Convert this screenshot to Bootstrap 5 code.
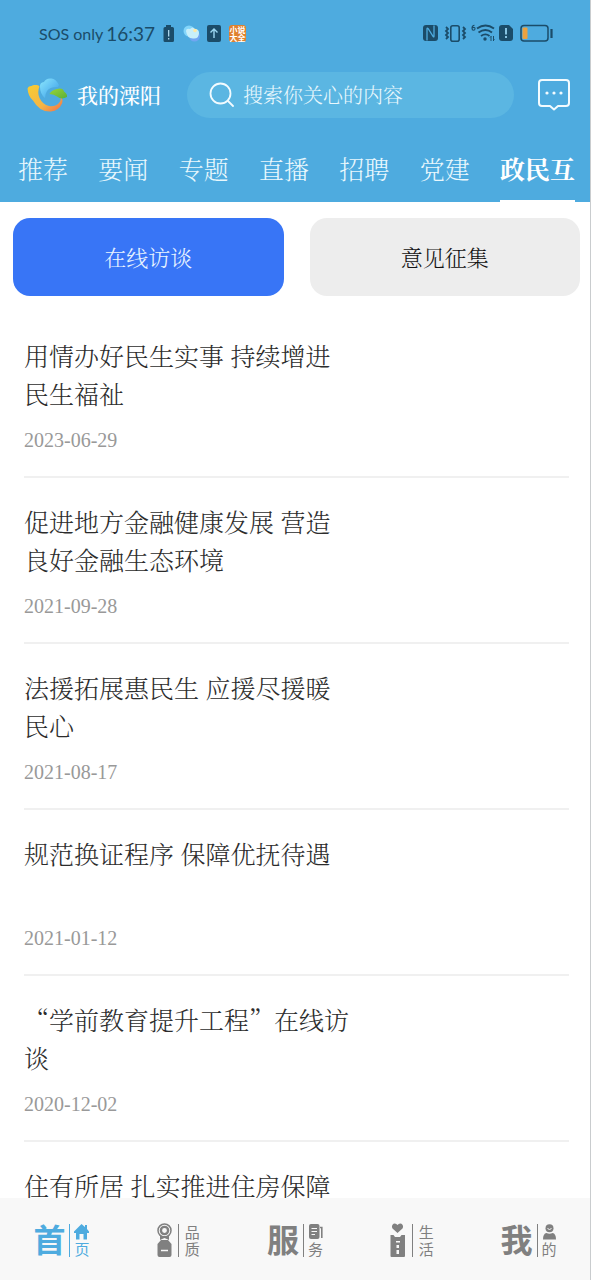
<!DOCTYPE html>
<html lang="zh-CN">
<head>
<meta charset="utf-8">
<meta name="viewport" content="width=device-width, initial-scale=1">
<title>我的溧阳</title>
<link href="https://cdn.jsdelivr.net/npm/bootstrap@5.3.0/dist/css/bootstrap.min.css" rel="stylesheet">
<style>
  :root { --sky: #4eabdf; --ink: #1b4c69; --cjk: "Noto Serif CJK SC", "Noto Serif SC", "Noto Sans CJK SC", serif; }
  body { font-family: var(--cjk); font-weight: 300; color: #2c2c2c; border-right: 1px solid #c9ccce; }
  svg { display: block; flex: none; }
  .app-head { background: var(--sky); margin-right: -1px; }
  .status-bar { height: 68px; padding: 0 38px 0 39px; color: var(--ink); font-family: Lato, "Noto Sans CJK SC", sans-serif; font-weight: 400; }
  .status-net { font-size: 16px; }
  .status-time { font-size: 19px; margin: 0 7px 0 3px; }
  .tiny-app { font: 700 8px "Noto Sans CJK SC", sans-serif; }
  .brand-bar { padding: 4px 21px 0 27px; }
  .brand-name { font-size: 21px; font-weight: 500; color: #fff; margin: 0 26px 0 10px; }
  .search-pill { background: #5bb6e2; height: 46px; border-radius: 23px; padding: 0 22px; margin-right: 24px; gap: 9px; }
  .search-pill input { border: 0; background: none; outline: 0; padding: 0; min-width: 0; font-size: 20px; font-weight: 300; color: #fff; }
  .search-pill input::placeholder { color: #e9f8fd; opacity: 1; }
  .tab-strip { padding: 20px 16px 0 18px; }
  .tab-strip a { display: block; font-size: 25px; line-height: 36px; padding: 12px 0 14px; color: #e9f8fd; text-decoration: none; border-bottom: 2px solid transparent; white-space: nowrap; }
  .tab-strip a.active { color: #fff; font-weight: 700; border-color: #fff; }
  .feed { scrollbar-width: none; }
  .feed::-webkit-scrollbar { display: none; }
  .switcher { padding: 16px 10px 16px 13px; gap: 26px; }
  .switcher button { flex: 1; height: 78px; border: 0; border-radius: 17px; font-size: 22px; font-weight: 300; background: #ededed; color: #111; padding: 0 0 2px; }
  .switcher button.on { background: #3875f6; color: #e9f4ff; }
  .stories { padding: 0 21px 0 24px; }
  .stories li { padding: 24px 0; border-bottom: 2px solid #f0f0f0; }
  .stories a { display: block; width: 60%; min-height: 76px; font-size: 25px; line-height: 38px; color: #2c2c2c; text-decoration: none; }
  .stories time { display: block; margin-top: 16px; font: 20px/24px "Liberation Serif", serif; color: #999; }
  .dock { background: #f8f8f8; height: 82px; padding: 0 3px; font-family: "Noto Sans CJK SC", sans-serif; }
  .dock a { flex: 1; gap: 4px; color: #808080; text-decoration: none; padding-top: 2px; }
  .dock a.active { color: var(--sky); }
  .dock .glyph { font-size: 32px; line-height: 34px; font-weight: 700; padding-bottom: 5px; }
  .dock .rule { width: 1px; height: 33px; background: currentColor; }
  .dock .pair { font-size: 15px; line-height: 17px; font-weight: 400; }
  .dock .spread { gap: 6px; }
</style>
</head>
<body class="vh-100 d-flex flex-column overflow-hidden bg-white">
<header class="app-head">
  <div class="status-bar d-flex align-items-center">
    <span class="status-net">SOS only</span>
    <span class="status-time">16:37</span>
    <svg width="86" height="20" viewBox="0 0 86 20" aria-hidden="true">
      <path fill="#1b4c69" d="M4 1h5v2h1.500q1.500 0 1.500 1.500v12q0 1.500-1.500 1.500h-7.500q-1.500 0-1.500-1.500v-12q0-1.500 1.500-1.500H4z"/>
      <path stroke="#b9e2f5" stroke-width="1.200" d="M6.700 6v6.500M6.700 14v1.500"/>
      <circle cx="27" cy="7" r="5.500" fill="#83d5fa"/><circle cx="32.500" cy="12" r="5.500" fill="#71a6f2"/>
      <path fill="#c8effa" d="M24 7q0-3 4-2 3-3 5 0 4 0 4 4 0 6-6 5.500-6 0-7-7.500z"/><circle cx="33" cy="6.500" r="1.800" fill="#ffe9a6"/>
      <rect x="45" y="1" width="14" height="17" rx="2" fill="#1b4c69"/>
      <path fill="none" stroke="#9cd7f2" stroke-width="1.400" d="M52 14V5M48.500 8.500 52 5l3.500 3.500"/>
      <rect x="67" y="1" width="17" height="17" rx="3" fill="#df812e"/>
      <g fill="#fff" class="tiny-app"><text x="67.500" y="9">小说</text><text x="67.500" y="16.500">大全</text></g>
    </svg>
    <svg class="ms-auto" width="130" height="20" viewBox="0 0 130 20" fill="none" stroke="#1b4c69" aria-hidden="true">
      <rect x="0" y="1" width="15" height="16" rx="3" fill="#1b4c69" stroke="none"/>
      <path stroke="#4eabdf" stroke-width="1.300" d="M4 16.500V5q0-1.500 1.200-.3l5 7.800q.8 1 .8-.5V1.500"/>
      <rect x="27.800" y="1.800" width="8.400" height="15.400" rx="2" stroke-width="1.600"/>
      <path stroke-width="1.800" d="m23 3 2 2-2 2 2 2-2 2 2 2-2 2M40 3l2 2-2 2 2 2-2 2 2 2-2 2"/>
      <path stroke-width="1.100" d="M51.500 1.200q-2.500 0-2.500 3 0 2 1.500 2t1.500-1.500-1.500-1.300-1.500 1"/>
      <path stroke-width="1.900" d="M54 4.500q8.500-6 17 0M55.500 8.500q7-5 13.500 0M58 12q4.500-3.200 8.500 0"/>
      <circle cx="62" cy="15" r="1.700" fill="#1b4c69" stroke="none"/><path d="M68 12v5M70.500 12v5M67 13.500l1-1M71.500 15.500l-1 1"/>
      <path fill="#1b4c69" stroke="none" d="M76 4q0-3 3-3h7l4 4v9q0 3-3 3h-8q-3 0-3-3z"/><path stroke="#93d0ee" stroke-width="1.800" d="M83 4v6.500M83 12v2"/>
      <rect x="98" y="1.500" width="27" height="15.500" rx="3" stroke-width="1.500"/><rect x="99.500" y="3.500" width="5" height="11.500" rx="1" fill="#eba23f" stroke="none"/><path stroke-width="2.200" d="M128.500 5v9"/>
    </svg>
  </div>
  <div class="brand-bar d-flex align-items-center">
    <svg width="40" height="34" viewBox="0 0 40 34" aria-hidden="true">
      <defs>
        <linearGradient id="sun" x2="1" y2="1"><stop stop-color="#f6cd33"/><stop offset=".6" stop-color="#f4b546"/><stop offset="1" stop-color="#ee6e4b"/></linearGradient>
        <linearGradient id="water" y2="1"><stop stop-color="#8be6fd"/><stop offset="1" stop-color="#389ce8"/></linearGradient>
        <linearGradient id="leaf" y2="1"><stop stop-color="#9bd634"/><stop offset="1" stop-color="#58af3b"/></linearGradient>
      </defs>
      <path fill="url(#sun)" d="M.500 11q.500-3 4-3Q6 6.500 9 7q2.500-.5 3.500 1.500Q10 14 12.500 20q3 6.500 9.500 8 6 1 10-3 2.500-2.500 1.500-6 3 2 1.500 6.500-3 7-11 8-11 1-18-11-5-4-5.500-12.500z"/>
      <path fill="url(#water)" d="M13 9q-.500-4.500 4-5 2-4 7-3.500 4.500-.5 8 6.500l-1 2q-8-.500-11 4-2 3-2 7-5-4-5-11z"/>
      <path fill="url(#leaf)" d="M22.500 16q2-4 7.500-5 6-1.500 7 2.500 4 3 3 5.500-5.500 3-10-.500-3-2.500-7.500-2.500z"/>
    </svg>
    <span class="brand-name text-nowrap">我的溧阳</span>
    <label class="search-pill d-flex align-items-center flex-fill">
      <svg width="25" height="26" viewBox="0 0 25 26" fill="none" stroke="#f2fbff" stroke-width="1.800" stroke-linecap="round" aria-hidden="true"><circle cx="11.500" cy="11.500" r="10"/><path d="m19 19 5 5"/></svg>
      <input class="flex-fill" type="search" placeholder="搜索你关心的内容" aria-label="搜索">
    </label>
    <button class="btn p-0 border-0" type="button" aria-label="消息">
      <svg width="32" height="32" viewBox="0 0 32 32" aria-hidden="true"><path fill="none" stroke="#f2fbff" stroke-width="2" stroke-linejoin="round" d="M4 1h24q3 0 3 3v20q0 3-3 3h-8l-4 3.500-4-3.500H4q-3 0-3-3V4q0-3 3-3z"/><g fill="#f2fbff"><circle cx="9" cy="14" r="1.600"/><circle cx="16" cy="14" r="1.600"/><circle cx="23" cy="14" r="1.600"/></g></svg>
    </button>
  </div>
  <nav class="tab-strip d-flex justify-content-between" aria-label="频道">
    <a href="#">推荐</a><a href="#">要闻</a><a href="#">专题</a><a href="#">直播</a><a href="#">招聘</a><a href="#">党建</a><a href="#" class="active" aria-current="page">政民互</a>
  </nav>
</header>

<main class="feed flex-fill overflow-auto">
  <div class="switcher d-flex">
    <button type="button" class="on">在线访谈</button>
    <button type="button">意见征集</button>
  </div>
  <ul class="stories list-unstyled mb-0">
    <li><a href="#">用情办好民生实事 持续增进民生福祉</a><time>2023-06-29</time></li>
    <li><a href="#">促进地方金融健康发展 营造良好金融生态环境</a><time>2021-09-28</time></li>
    <li><a href="#">法援拓展惠民生 应援尽援暖民心</a><time>2021-08-17</time></li>
    <li><a href="#">规范换证程序 保障优抚待遇</a><time>2021-01-12</time></li>
    <li><a href="#">“学前教育提升工程”在线访谈</a><time>2020-12-02</time></li>
    <li><a href="#">住有所居 扎实推进住房保障</a></li>
  </ul>
</main>

<nav class="dock d-flex flex-shrink-0" aria-label="主导航">
  <a href="#" class="active d-flex align-items-center justify-content-center" aria-current="page">
    <span class="glyph">首</span><span class="rule"></span>
    <span class="pair"><svg width="15" height="16" viewBox="0 0 15 16" fill="currentColor" aria-hidden="true"><path d="M7.500 0 11 3V1h2v4l2 2.500V9h-2v6.500H9.500V10h-4v5.500H2V9H0V7.500z"/></svg>页</span>
  </a>
  <a href="#" class="spread d-flex align-items-center justify-content-center">
    <svg width="15" height="34" viewBox="0 0 15 34" fill="currentColor" aria-hidden="true"><circle cx="7.500" cy="7.500" r="6.500" fill="none" stroke="currentColor" stroke-width="1.500"/><circle cx="7.500" cy="7.500" r="3.600" fill="none" stroke="currentColor" stroke-width="2.400"/><path d="M3 13h9v4l-4.500-2L3 17zM4 17h7l3.500 4v11q0 2-2 2h-10q-2 0-2-2V21z"/><path stroke="#f8f8f8" stroke-width="1.500" d="M4 27.500h7"/></svg>
    <span class="rule"></span><span class="pair">品<br>质</span>
  </a>
  <a href="#" class="d-flex align-items-center justify-content-center">
    <span class="glyph">服</span><span class="rule"></span>
    <span class="pair"><svg width="15" height="16" viewBox="0 0 15 16" aria-hidden="true"><rect x="1" width="10.500" height="15" rx="2" fill="currentColor"/><path fill="none" stroke="currentColor" stroke-width="1.600" d="M12 3.500h1.800V14"/><path stroke="#f8f8f8" stroke-width="1.200" d="M3.500 4.500h5.500M3.500 7.500h5.500M3.500 10.500h3.500"/></svg>务</span>
  </a>
  <a href="#" class="spread d-flex align-items-center justify-content-center">
    <svg width="16" height="34" viewBox="0 0 16 34" fill="currentColor" aria-hidden="true"><path d="M7.500 10 2.500 5.500Q1 2.500 3.500.700 6-.200 7.500 2 9-.200 11.500.700q2.500 1.800 1 4.800zM.500 12H3.500l1.500 2h5l1.500-2H15v21q0 1-1 1H1.500q-1 0-1-1z"/><path fill="#f8f8f8" d="M6 18h4v1.500H6zM6.500 22h2.500v3H6.500zM6.500 27h2.500v4H6.500z"/></svg>
    <span class="rule"></span><span class="pair">生<br>活</span>
  </a>
  <a href="#" class="d-flex align-items-center justify-content-center">
    <span class="glyph">我</span><span class="rule"></span>
    <span class="pair"><svg width="15" height="16" viewBox="0 0 15 16" aria-hidden="true"><circle cx="7.500" cy="4.200" r="4" fill="currentColor"/><path fill="currentColor" d="M1 15.500q0-6 3.500-6.500 3 1.500 6 0Q14 9.500 14 15.500z"/><path fill="none" stroke="#f8f8f8" d="M5.500 4.500q2 2 4 0"/></svg>的</span>
  </a>
</nav>
<script src="https://cdn.jsdelivr.net/npm/bootstrap@5.3.0/dist/js/bootstrap.bundle.min.js"></script>
</body>
</html>
